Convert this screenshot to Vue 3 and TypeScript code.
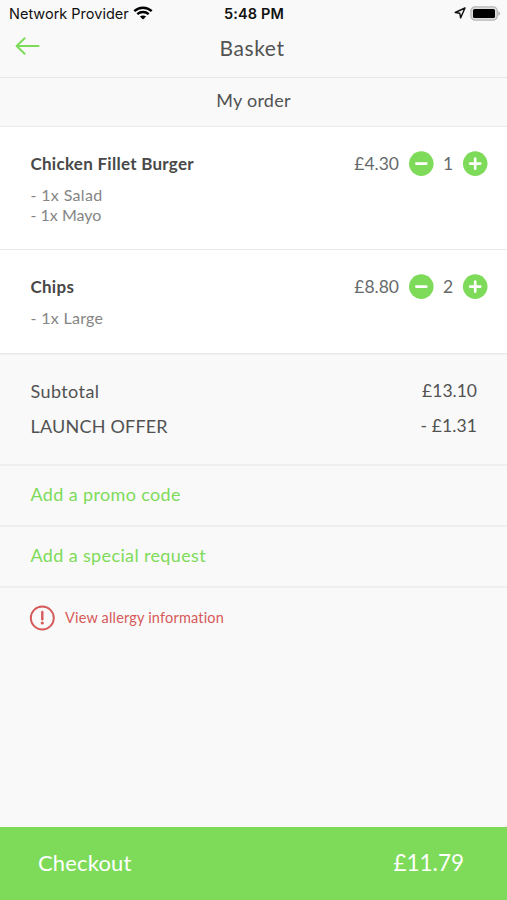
<script setup lang="ts">
interface Option {
  label: string
  tracking: number
}

interface BasketItem {
  name: string
  price: string
  quantity: number
  options: Option[]
}

const items: BasketItem[] = [
  {
    name: 'Chicken Fillet Burger',
    price: '£4.30',
    quantity: 1,
    options: [
      { label: '- 1x Salad', tracking: 0.35 },
      { label: '- 1x Mayo', tracking: 0 },
    ],
  },
  {
    name: 'Chips',
    price: '£8.80',
    quantity: 2,
    options: [{ label: '- 1x Large', tracking: 0.3 }],
  },
]
</script>

<template>
  <main class="screen">
    <div class="status">
      <div class="carrier">
        <span>Network Provider</span>
        <svg class="wifi" width="20" height="14" viewBox="0 0 20 14">
          <path d="M1.3 5.2C6.2.6 13.8.6 18.7 5.2" />
          <path d="M4.3 8.1C7.6 5.2 12.4 5.2 15.7 8.1" />
          <path class="dot" d="M10 13.6 6.9 10.6C8.6 9 11.4 9 13.1 10.6Z" />
        </svg>
      </div>
      <span class="time">5:48 PM</span>
      <div class="indicators">
        <svg width="12" height="12" viewBox="0 0 12 12">
          <path d="M11 1 1.2 5.5 5.8 6.3 6.6 10.9Z" fill="none" stroke="#111" stroke-width="1.4" stroke-linejoin="round" />
        </svg>
        <svg width="30" height="15" viewBox="0 0 30 15">
          <rect x=".9" y=".9" width="26.4" height="13.2" rx="4" fill="#ddd" stroke="#b5b5b5" stroke-width="1.2" />
          <rect x="3" y="3" width="22" height="9" rx="1.6" fill="#000" />
          <path d="M28.3 5.2Q30 5.8 30 7.5T28.3 9.8Z" fill="#b0b0b0" />
        </svg>
      </div>
    </div>

    <header class="header">
      <svg class="back" width="26" height="20" viewBox="0 0 26 20">
        <path d="M23.5 10H1.6M9.6 2.2 1.6 10 9.6 17.8" />
      </svg>
      <h1>Basket</h1>
    </header>

    <h2 class="section">My order</h2>

    <section v-for="item in items" :key="item.name" class="item">
      <div class="item-row">
        <h3>{{ item.name }}</h3>
        <span class="price">{{ item.price }}</span>
        <div class="stepper">
          <svg width="26" height="26" viewBox="0 0 26 26">
            <circle cx="13.3" cy="12.6" r="12.3" />
            <path d="M8.3 12.6H18.3" />
          </svg>
          <span class="quantity">{{ item.quantity }}</span>
          <svg width="26" height="26" viewBox="0 0 26 26">
            <circle cx="13.2" cy="12.6" r="12.3" />
            <path d="M8.1 12.6H18.3M13.2 7.5V17.7" />
          </svg>
        </div>
      </div>
      <ul>
        <li v-for="o in item.options" :key="o.label" :style="{ letterSpacing: o.tracking + 'px' }">{{ o.label }}</li>
      </ul>
    </section>

    <section class="totals">
      <div class="total"><span class="subtotal">Subtotal</span><span class="amount">£13.10</span></div>
      <div class="total"><span class="offer">LAUNCH OFFER</span><span class="amount discount">- £1.31</span></div>
    </section>

    <div class="link promo">Add a promo code</div>
    <div class="link request">Add a special request</div>

    <div class="allergy">
      <svg width="26" height="26" viewBox="0 0 26 26">
        <circle cx="13.3" cy="13" r="11.5" />
        <path d="M13.3 7V14.2" />
        <circle class="point" cx="13.3" cy="18" r="1.6" />
      </svg>
      <span>View allergy information</span>
    </div>

    <footer class="checkout">
      <span class="checkout-label">Checkout</span>
      <span class="checkout-total">£11.79</span>
    </footer>
  </main>
</template>

<style>
body {
  background: #f9f9f9;
}
</style>

<style scoped>
.screen {
  display: flex;
  flex-direction: column;
  box-sizing: border-box;
  width: 507px;
  height: 900px;
  background: #f9f9f9;
  color: #525252;
  font-family: Lato, 'Noto Sans', sans-serif;
  overflow: hidden;
}

svg {
  display: block;
  flex: none;
}

h1,
h2,
h3,
ul {
  margin: 0;
  padding: 0;
  font-weight: 400;
  list-style: none;
}

.status {
  display: grid;
  grid-template-columns: 1fr auto 1fr;
  align-items: center;
  height: 27px;
  padding: 0 8px 0 9px;
  color: #111;
  font: 14.5px Inter, sans-serif;
}

.carrier {
  display: flex;
  align-items: center;
  gap: 4px;
  white-space: nowrap;
}

.wifi {
  margin-bottom: 1px;
  fill: none;
  stroke: #000;
  stroke-width: 2.5;
}

.wifi .dot {
  fill: #000;
  stroke: none;
}

.time {
  font-weight: 600;
  letter-spacing: 0.1px;
}

.indicators {
  display: flex;
  align-items: center;
  justify-content: flex-end;
  gap: 4px;
  margin-right: -1px;
  padding-bottom: 1px;
}

.header {
  display: grid;
  grid-template-columns: 1fr auto 1fr;
  align-items: center;
  height: 50px;
  padding: 0 18px 0 15px;
  border-bottom: 1px solid #e6e6e6;
}

.back {
  margin-bottom: 12px;
  fill: none;
  stroke: #7edb59;
  stroke-width: 2;
  stroke-linecap: round;
  stroke-linejoin: round;
}

h1 {
  margin-bottom: 9px;
  font-size: 21px;
  line-height: 26px;
  letter-spacing: 0.6px;
}

.section {
  height: 48px;
  border-bottom: 1px solid #ebebeb;
  font-size: 18px;
  line-height: 45px;
  letter-spacing: 0.25px;
  text-align: center;
}

.item {
  padding: 24px 19px 25px 30.5px;
  border-bottom: 1px solid #e9e9e9;
  background: #fff;
}

.item-row {
  display: flex;
  align-items: center;
  height: 26px;
}

h3 {
  flex: 1;
  padding-bottom: 1px;
  color: #484848;
  font-size: 17px;
  font-weight: 700;
  letter-spacing: 0.27px;
}

.price {
  margin-right: 9px;
  padding-bottom: 1px;
  color: #666a6c;
  font-size: 17.5px;
}

.stepper {
  display: flex;
  align-items: center;
}

.stepper circle {
  fill: #7edb59;
}

.stepper path {
  fill: none;
  stroke: #fff;
  stroke-width: 2.6;
  stroke-linecap: round;
}

.quantity {
  width: 28px;
  padding-bottom: 1px;
  color: #666a6c;
  font-size: 17.5px;
  text-align: center;
}

ul {
  margin-top: 8px;
  color: #858585;
  font-size: 16px;
  line-height: 19.5px;
}

.totals {
  display: flex;
  flex-direction: column;
  gap: 9px;
  padding: 23px 30px 25px 30.5px;
  border-top: 1px solid #f0f0f0;
  border-bottom: 2px solid #efefef;
}

.total {
  display: flex;
  justify-content: space-between;
  font-size: 18px;
  line-height: 26px;
}

.subtotal {
  letter-spacing: 0.4px;
}

.offer {
  letter-spacing: 0.2px;
}

.amount {
  font-size: 17.5px;
}

.discount {
  letter-spacing: 0.1px;
}

.link {
  height: 59px;
  padding: 0 30.5px;
  border-bottom: 2px solid #efefef;
  color: #7edb59;
  font-size: 18px;
  line-height: 57px;
}

.promo {
  letter-spacing: 0.36px;
}

.request {
  letter-spacing: 0.36px;
}

.allergy {
  display: flex;
  align-items: center;
  gap: 10px;
  padding: 17px 29px;
  color: #d65a5a;
  font-size: 14.5px;
  letter-spacing: 0.18px;
}

.allergy circle,
.allergy path {
  fill: none;
  stroke: #d65a5a;
  stroke-width: 1.9;
}

.allergy path {
  stroke-width: 2.4;
  stroke-linecap: round;
}

.allergy .point {
  fill: #d65a5a;
  stroke: none;
}

.checkout {
  display: flex;
  align-items: center;
  justify-content: space-between;
  height: 73px;
  margin-top: auto;
  padding: 0 43px 3px 38px;
  box-sizing: border-box;
  background: #7edb59;
  color: #fff;
  font-size: 22px;
}

.checkout-label {
  letter-spacing: 0.15px;
}

.checkout-total {
  font-size: 22.5px;
}
</style>
